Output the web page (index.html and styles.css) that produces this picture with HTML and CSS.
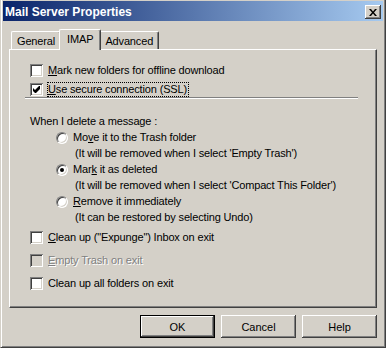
FILE: index.html
```html
<!DOCTYPE html>
<html lang="en">
<head>
  <meta charset="UTF-8">
  <title>Mail Server Properties</title>
  <link rel="stylesheet" href="styles.css">
</head>
<body>

  <div class="window">
    <div class="titlebar">
      <span class="title">Mail Server Properties</span>
      <span class="close-btn">
        <svg width="8" height="7" viewBox="0 0 8 7"><path d="M0 0h2l2 2.5 2-2.5h2L5 3.5 8 7H6L4 4.5 2 7H0l3-3.5z"/></svg>
      </span>
    </div>

    <div class="dialog-body">
      <div class="tabs">
        <div class="tab">General</div>
        <div class="tab tab-active">IMAP</div>
        <div class="tab">Advanced</div>
      </div>

      <div class="panel">
        <div class="row">
          <span class="check"></span>
          <span class="label"><u>M</u>ark new folders for offline download</span>
        </div>
        <div class="row row-focus">
          <span class="check"><svg width="13" height="13" viewBox="0 0 13 13"><path d="M3 5L5 7L9 3H10V6L6 10H5L3 8Z"/></svg></span>
          <span class="label"><u>U</u>se secure connection (SSL)</span>
        </div>

        <div class="sep"></div>

        <div class="group-label">When I delete a message :</div>
        <div class="options">
          <div class="row opt">
            <span class="radio"></span>
            <span class="label">Mo<u>v</u>e it to the Trash folder</span>
          </div>
          <div class="note">(It will be removed when I select 'Empty Trash')</div>
          <div class="row opt opt-mid">
            <span class="radio radio-on"></span>
            <span class="label">Mar<u>k</u> it as deleted</span>
          </div>
          <div class="note">(It will be removed when I select 'Compact This Folder')</div>
          <div class="row opt">
            <span class="radio"></span>
            <span class="label"><u>R</u>emove it immediately</span>
          </div>
          <div class="note">(It can be restored by selecting Undo)</div>
        </div>

        <div class="exit-opts">
          <div class="row">
            <span class="check"></span>
            <span class="label"><u>C</u>lean up ("Expunge") Inbox on exit</span>
          </div>
          <div class="row row-disabled">
            <span class="check"></span>
            <span class="label"><u>E</u>mpty Trash on exit</span>
          </div>
          <div class="row">
            <span class="check"></span>
            <span class="label">Clean up all folders on exit</span>
          </div>
        </div>
      </div>

      <div class="buttons">
        <button class="btn btn-default">OK</button>
        <button class="btn">Cancel</button>
        <button class="btn">Help</button>
      </div>
    </div>
  </div>

</body>
</html>
```

FILE: styles.css
```css
body {
  margin: 0;
  background-color: #d4d0c8;
  font-family: "Liberation Sans", Arial, sans-serif;
  font-size: 11px;
  letter-spacing: -0.15px;
  color: #000;
  overflow: hidden;
}

u {
  text-decoration: underline;
}

/* window frame */
.window {
  box-sizing: border-box;
  width: 386px;
  height: 350px;
  margin-top: -2px;
  padding: 2px;
  border: 1px solid;
  border-color: #d4d0c8 #404040 #404040 #d4d0c8;
  box-shadow: inset 1px 1px #fff, inset -1px -1px #808080;
  background-color: #d4d0c8;
}

.titlebar {
  display: flex;
  align-items: center;
  height: 20px;
  padding: 0 2px;
  background: linear-gradient(to right, #0a246a, #a6caf0);
  color: #fff;
  font-size: 12px;
  font-weight: bold;
  letter-spacing: 0;
}

.title {
  flex: 1;
  padding-top: 1px;
}

.close-btn {
  box-sizing: border-box;
  width: 16px;
  height: 14px;
  align-self: flex-end;
  margin-bottom: 2px;
  display: flex;
  align-items: center;
  justify-content: center;
  background-color: #d4d0c8;
  box-shadow: inset -1px -1px #404040, inset 1px 1px #fff, inset -2px -2px #808080, inset 2px 2px #d4d0c8;
}

.dialog-body {
  padding: 8px 6px 0;
}

/* tabs */
.tabs {
  display: flex;
  align-items: flex-end;
  height: 20px;
  padding-left: 2px;
}

.tab {
  box-sizing: border-box;
  height: 18px;
  padding: 1px 5px 0;
  line-height: 16px;
  border-top: 1px solid #fff;
  border-left: 1px solid #fff;
  border-right: 1px solid #404040;
  border-radius: 2px 2px 0 0;
  box-shadow: inset -1px 0 #808080;
  background-color: #d4d0c8;
}

.tab-active {
  height: 21px;
  margin: 0 -2px -1px;
  padding: 1px 7px 0;
  position: relative;
  z-index: 1;
}

.panel {
  box-sizing: border-box;
  height: 259px;
  padding: 13px 0 0 20px;
  border: 1px solid;
  border-color: #fff #404040 #404040 #fff;
  box-shadow: inset -1px -1px #808080;
}

/* rows */
.row {
  display: flex;
  align-items: center;
  height: 15px;
  line-height: 15px;
}

.row + .row {
  margin-top: 4px;
}

.row .label {
  margin-left: 5px;
  white-space: nowrap;
}

.row-focus .label {
  margin-left: 4px;
  padding-right: 1px;
  border: 1px dotted #000;
  line-height: 13px;
}

.check {
  flex: none;
  width: 13px;
  height: 13px;
  background-color: #fff;
  box-shadow: inset 1px 1px #808080, inset -1px -1px #fff, inset 2px 2px #404040, inset -2px -2px #d4d0c8;
}

.check svg {
  display: block;
}

.row-disabled .check {
  background-color: #d4d0c8;
}

.row-disabled .label {
  color: #808080;
  text-shadow: 1px 1px #fff;
}

.sep {
  width: 333px;
  margin-left: -5px;
  border-top: 1px solid #808080;
  border-bottom: 1px solid #fff;
}

.group-label {
  margin-top: 15px;
  line-height: 15px;
}

.options {
  margin: 1px 0 0 26px;
}

.row.opt + .note,
.note + .row.opt {
  margin-top: 1px;
}

.note + .opt-mid {
  margin-top: 2px;
}

.note {
  margin-left: 19px;
  line-height: 15px;
  white-space: nowrap;
}

.radio {
  flex: none;
  box-sizing: border-box;
  width: 12px;
  height: 12px;
  display: flex;
  align-items: center;
  justify-content: center;
  border-radius: 50%;
  border: 1px solid;
  border-color: #808080 #fff #fff #808080;
  box-shadow: inset 1px 1px #404040, inset -1px -1px #d4d0c8;
  background-color: #fff;
}

.radio-on::after {
  content: "";
  width: 4px;
  height: 4px;
  border-radius: 50%;
  background-color: #000;
}

.exit-opts {
  margin-top: 5px;
}

.exit-opts .row + .row {
  margin-top: 8px;
}

/* buttons */
.buttons {
  display: flex;
  justify-content: flex-end;
  gap: 6px;
  margin-top: 7px;
}

.btn {
  box-sizing: border-box;
  width: 75px;
  height: 23px;
  padding: 0;
  border: none;
  font: inherit;
  color: #000;
  background-color: #d4d0c8;
  box-shadow: inset -1px -1px #404040, inset 1px 1px #fff, inset -2px -2px #808080, inset 2px 2px #d4d0c8;
}

.btn-default {
  border: 1px solid #000;
}
```
